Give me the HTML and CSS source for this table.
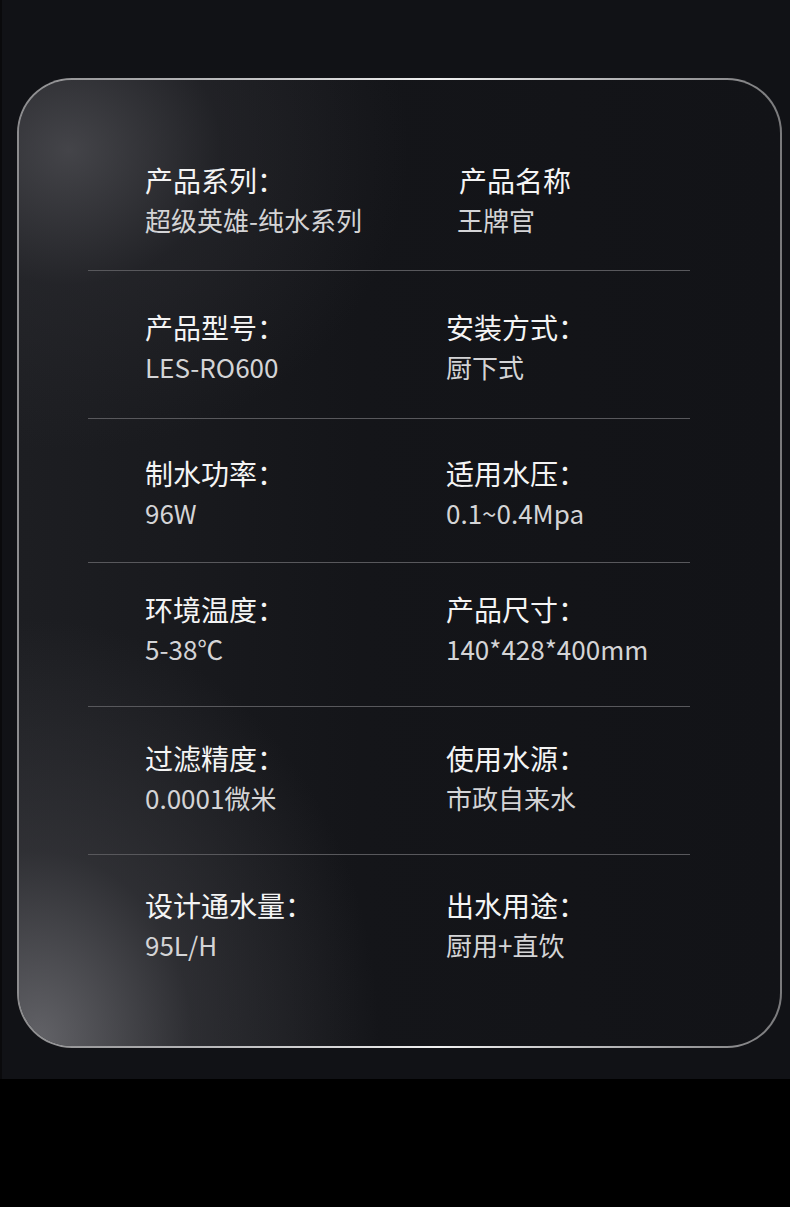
FILE: index.html
```html
<!DOCTYPE html>
<html lang="zh-CN">
<head>
<meta charset="utf-8">
<title>产品参数</title>
<link rel="stylesheet" href="styles.css">
</head>
<body>
<main class="page">
  <section class="card">
    <div class="specs">
      <div class="spec-row">
        <div class="spec"><div class="spec-label">产品系列：</div><div class="spec-value">超级英雄-纯水系列</div></div>
        <div class="spec spec--shift"><div class="spec-label">产品名称</div><div class="spec-value">王牌官</div></div>
      </div>
      <div class="spec-row">
        <div class="spec"><div class="spec-label">产品型号：</div><div class="spec-value">LES-RO600</div></div>
        <div class="spec"><div class="spec-label">安装方式：</div><div class="spec-value">厨下式</div></div>
      </div>
      <div class="spec-row">
        <div class="spec"><div class="spec-label">制水功率：</div><div class="spec-value">96W</div></div>
        <div class="spec"><div class="spec-label">适用水压：</div><div class="spec-value">0.1~0.4Mpa</div></div>
      </div>
      <div class="spec-row spec-row--high">
        <div class="spec"><div class="spec-label">环境温度：</div><div class="spec-value">5-38℃</div></div>
        <div class="spec"><div class="spec-label">产品尺寸：</div><div class="spec-value">140*428*400mm</div></div>
      </div>
      <div class="spec-row spec-row--raised">
        <div class="spec"><div class="spec-label">过滤精度：</div><div class="spec-value">0.0001微米</div></div>
        <div class="spec"><div class="spec-label">使用水源：</div><div class="spec-value">市政自来水</div></div>
      </div>
      <div class="spec-row spec-row--raised spec-row--last">
        <div class="spec"><div class="spec-label">设计通水量：</div><div class="spec-value">95L/H</div></div>
        <div class="spec"><div class="spec-label">出水用途：</div><div class="spec-value">厨用+直饮</div></div>
      </div>
    </div>
  </section>
</main>
<div class="footer-band"></div>
</body>
</html>
```

FILE: styles.css
```css
html, body {
  margin: 0;
  padding: 0;
}

body {
  width: 790px;
  height: 1207px;
  background: #000;
  font-family: "Noto Sans CJK SC", "Noto Sans", sans-serif;
  overflow: hidden;
}

.page {
  height: 1079px;
  box-sizing: border-box;
  padding: 78px 8px 0 17px;
  background: #111216;
  border-left: 2px solid #0a0a0c;
}

.card {
  box-sizing: border-box;
  width: 765px;
  height: 970px;
  margin-left: -2px;
  border: 2px solid transparent;
  border-radius: 55px;
  padding: 49px 0 0 69px;
  background:
    radial-gradient(ellipse 340px 420px at 20px 960px, rgba(110,110,115,0.85), rgba(70,70,75,0.45) 45%, rgba(40,40,44,0) 100%) padding-box,
    radial-gradient(ellipse 340px 300px at 50px 70px, rgba(85,85,90,0.7), rgba(50,50,55,0.35) 45%, rgba(30,30,34,0) 100%) padding-box,
    linear-gradient(to right, #1d1e22 0%, #141519 45%, #121317 100%) padding-box,
    linear-gradient(to right, #8c8c8e 0%, #b8b8ba 25%, #f0f0f0 55%, #b0b0b2 80%, #7a7a7c 100%) border-box;
}

.specs {
  width: 602px;
  display: grid;
  grid-template-rows: 142px 148px 144px 144px 148px 144px;
}

.spec-row {
  box-sizing: border-box;
  display: grid;
  grid-template-columns: 301px 1fr;
  align-items: center;
  padding-left: 57px;
  padding-top: 3px;
  border-bottom: 1px solid #58585c;
}

.spec-row:first-child {
  padding-top: 0;
}

.spec-row--high {
  padding-top: 0;
  padding-bottom: 12px;
}

.spec-row--raised {
  padding-top: 0;
  padding-bottom: 6px;
}

.spec-row--last {
  border-bottom: none;
}

.spec {
  display: flex;
  flex-direction: column;
  gap: 5px;
}

.spec--shift {
  padding-left: 11px;
}

.spec-label {
  font-size: 28px;
  line-height: 36px;
  color: #f4f4f4;
}

.spec--shift .spec-label {
  padding-left: 2px;
}

.spec-value {
  font-size: 26px;
  line-height: 34px;
  color: #d4d4d6;
}

.footer-band {
  height: 128px;
  background: #000;
}
```
